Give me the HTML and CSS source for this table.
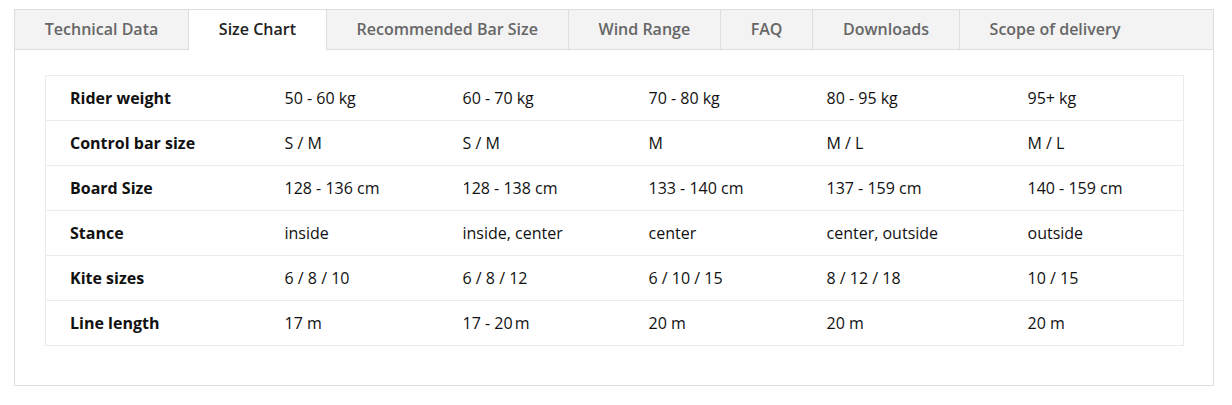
FILE: index.html
```html
<!DOCTYPE html>
<html lang="en">
<head>
<meta charset="utf-8">
<title>Size Chart</title>
<link rel="stylesheet" href="styles.css">
</head>
<body>
<div class="panel">
  <div class="tabs">
    <div class="tab">Technical Data</div>
    <div class="tab active">Size Chart</div>
    <div class="tab">Recommended Bar Size</div>
    <div class="tab">Wind Range</div>
    <div class="tab">FAQ</div>
    <div class="tab">Downloads</div>
    <div class="tab last">Scope of delivery</div>
  </div>
  <div class="content">
    <table class="chart">
      <colgroup>
        <col class="c1"><col class="c2"><col class="c3"><col class="c4"><col class="c5"><col class="c6">
      </colgroup>
      <tr><th>Rider weight</th><td>50 - 60 kg</td><td>60 - 70 kg</td><td>70 - 80 kg</td><td>80 - 95 kg</td><td>95+ kg</td></tr>
      <tr><th>Control bar size</th><td>S / M</td><td>S / M</td><td>M</td><td>M / L</td><td>M / L</td></tr>
      <tr><th>Board Size</th><td>128 - 136 cm</td><td>128 - 138 cm</td><td>133 - 140 cm</td><td>137 - 159 cm</td><td>140 - 159 cm</td></tr>
      <tr><th>Stance</th><td>inside</td><td>inside, center</td><td>center</td><td>center, outside</td><td>outside</td></tr>
      <tr><th>Kite sizes</th><td>6 / 8 / 10</td><td>6 / 8 / 12</td><td>6 / 10 / 15</td><td>8 / 12 / 18</td><td>10 / 15</td></tr>
      <tr><th>Line length</th><td>17 m</td><td>17 - 20&#8239;m</td><td>20 m</td><td>20 m</td><td>20 m</td></tr>
    </table>
  </div>
</div>
</body>
</html>
```
FILE: styles.css
```css
html, body {
  margin: 0;
  padding: 0;
  background: #ffffff;
}
body {
  padding: 9px 18px 0 14px;
  font-family: "Open Sans", "Liberation Sans", sans-serif;
  font-size: 16px;
}
.panel {
  border: 1px solid #dddddd;
  width: 1200px;
  box-sizing: border-box;
}
.tabs {
  display: flex;
  background: #f3f3f3;
  border-bottom: 1px solid #dddddd;
  height: 40px;
  box-sizing: border-box;
}
.tab {
  padding: 0 29.8px;
  line-height: 39px;
  color: #666666;
  font-weight: 600;
  border-right: 1px solid #dddddd;
  white-space: nowrap;
}
.tab.active {
  background: #ffffff;
  color: #222222;
  height: 40px;
}
.tab.last {
  border-right: none;
}
.content {
  padding: 25px 30px 39px 30px;
}
.chart {
  width: 1138px;
  border-collapse: collapse;
  table-layout: fixed;
  border: 1px solid #ebebeb;
}
.c1 { width: 215px; }
.c2 { width: 178px; }
.c3 { width: 186px; }
.c4 { width: 178px; }
.c5 { width: 201px; }
.c6 { width: 180px; }
.chart th, .chart td {
  height: 45px;
  padding: 0 0 0 24px;
  text-align: left;
  border-bottom: 1px solid #ebebeb;
  color: #111111;
  font-size: 16px;
  line-height: 22px;
  white-space: nowrap;
  box-sizing: border-box;
}
.chart th {
  font-weight: 700;
}
.chart td {
  font-weight: 400;
}
```
